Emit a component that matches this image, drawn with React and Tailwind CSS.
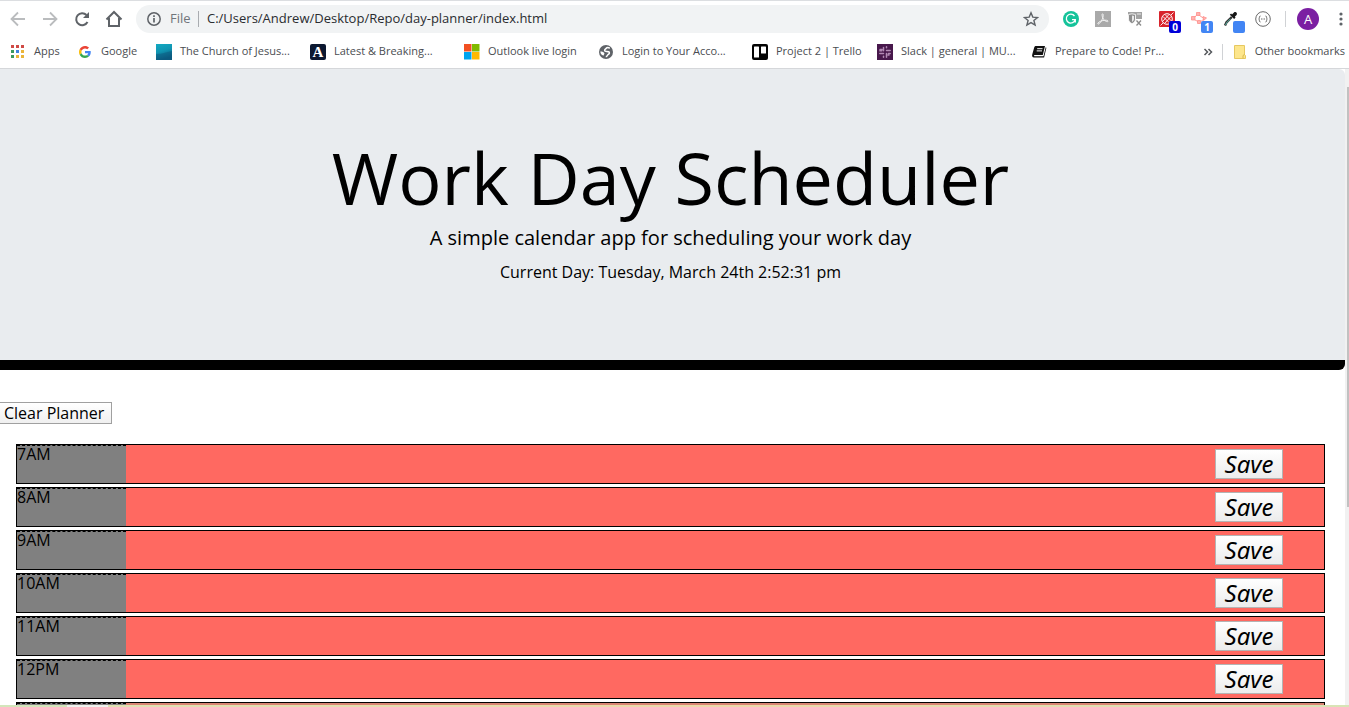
import React from "react";

const HOURS = ["7AM", "8AM", "9AM", "10AM", "11AM", "12PM"];

function AppsIcon() {
  const colors = ["#d04a45", "#d04a45", "#d04a45", "#3c9a5f", "#3f84e0", "#eab53a", "#3c9a5f", "#eab53a", "#eab53a"];
  return (
    <svg viewBox="0 0 14 14" className="h-3.5 w-3.5 shrink-0">
      {colors.map((c, i) => (
        <rect key={i} x={1 + (i % 3) * 5} y={Math.floor(i / 3) * 5} width="3" height="3" fill={c} />
      ))}
    </svg>
  );
}

function GoogleIcon() {
  return (
    <svg viewBox="0 0 48 48" className="ml-0.5 h-3 w-3 shrink-0">
      <path fill="#EA4335" d="M24 9.5c3.54 0 6.71 1.22 9.21 3.6l6.85-6.85C35.9 2.38 30.47 0 24 0 14.62 0 6.51 5.38 2.56 13.22l7.98 6.19C12.43 13.72 17.74 9.5 24 9.5z" />
      <path fill="#4285F4" d="M46.98 24.55c0-1.57-.15-3.09-.38-4.55H24v9.02h12.94c-.58 2.96-2.26 5.48-4.78 7.18l7.73 6c4.51-4.18 7.09-10.36 7.09-17.65z" />
      <path fill="#FBBC05" d="M10.53 28.59c-.48-1.45-.76-2.99-.76-4.59s.27-3.14.76-4.59l-7.98-6.19C.92 16.46 0 20.12 0 24c0 3.88.92 7.54 2.56 10.78l7.97-6.19z" />
      <path fill="#34A853" d="M24 48c6.48 0 11.93-2.13 15.89-5.81l-7.73-6c-2.15 1.45-4.92 2.3-8.16 2.3-6.26 0-11.57-4.22-13.47-9.91l-7.98 6.19C6.51 42.62 14.62 48 24 48z" />
    </svg>
  );
}

function ChurchIcon() {
  return (
    <svg viewBox="0 0 16 16" className="h-4 w-4 shrink-0">
      <defs>
        <linearGradient id="sea" x1="0" y1="0" x2="0.3" y2="1">
          <stop offset="0" stopColor="#12aac2" />
          <stop offset="0.5" stopColor="#1095b2" />
          <stop offset="1" stopColor="#0a5a80" />
        </linearGradient>
      </defs>
      <rect width="16" height="16" fill="url(#sea)" />
      <path d="M0 10Q5 10 8 9T16 7V16H0z" fill="#0b5a80" opacity="0.5" />
    </svg>
  );
}

function AtlanticIcon() {
  return (
    <span className="flex h-4 w-4 shrink-0 items-center justify-center rounded-xs bg-[#0c1830] font-['Liberation_Serif',serif] text-[15px] leading-4 font-bold text-white">
      A
    </span>
  );
}

function MicrosoftIcon() {
  return (
    <svg viewBox="0 0 16 16" className="h-4 w-4 shrink-0">
      <path fill="#f25022" d="M0 0h7.500v7.500H0z" />
      <path fill="#7fba00" d="M8 0h7.500v7.500H8z" />
      <path fill="#00a4ef" d="M0 8h7.500v7.500H0z" />
      <path fill="#ffb900" d="M8 8h7.500v7.500H8z" />
    </svg>
  );
}

function GlobeIcon() {
  return (
    <svg viewBox="0 0 16 16" className="h-4 w-4 shrink-0">
      <circle cx="8" cy="8" r="7" fill="#5f6368" />
      <path d="M11.800 4.200C10.500 3.600 9 3.300 8.300 4.300c-.7 1-1.300.8-1.600 1.600-.4 1.200.9 1.500 2 1.500 1.300 0 2.900.3 2.700 1.700-.2 1.300-1.600 1.200-2 2.300-.2.7-.8 1.200-1.600 1.300" fill="none" stroke="#fff" strokeWidth="1.500" />
      <path d="M2.300 7.500c1.500 0 3 .3 4 1.500.3 1-.5 1.300-.5 2.600C4 11.500 2.500 10 2.300 7.500z" fill="#fff" />
    </svg>
  );
}

function TrelloIcon() {
  return (
    <svg viewBox="0 0 16 16" className="h-4 w-4 shrink-0">
      <rect width="16" height="16" rx="2" fill="#050505" />
      <rect x="2" y="2.500" width="5" height="11" rx="0.500" fill="#fff" />
      <rect x="9" y="2.500" width="5" height="7" rx="0.500" fill="#fff" />
    </svg>
  );
}

function SlackIcon() {
  return (
    <svg viewBox="0 0 16 16" className="h-4 w-4 shrink-0">
      <rect width="16" height="16" fill="#48184c" />
      <g stroke="#b28ab5" strokeWidth="1.500" strokeLinecap="round" fill="none">
        <path d="M6.500 3.500v3.200M2.800 6.700h2M9.500 2.800v1M9.500 6.500h3.700M2.800 9.500h3.700M6.500 12.200v1M9.500 9.500v3.700M11.500 9.500h1.700M3 5.500h2M11 11h1" />
      </g>
    </svg>
  );
}

function BookIcon() {
  return (
    <svg viewBox="0 0 16 16" className="h-4 w-4 shrink-0">
      <path d="M5 2h9l-2.200 9H3.800c-1 0-1.300 1.200-.3 1.200h9l2.200-9 .7.500-2.300 9.800H3c-1.800 0-2.200-1.500-1.700-3.200L3.200 3.500C3.500 2.500 4 2 5 2z" fill="#111" />
      <path d="M6.200 4.700h5.300M5.700 6.900h5.300" stroke="#fff" strokeWidth="1" />
    </svg>
  );
}

function FolderIcon() {
  return (
    <svg viewBox="0 0 14 16" className="h-4 w-3.5 shrink-0">
      <path d="M1.500 1.500h10v9.500l1 .5v3h-11z" fill="#fde68c" stroke="#e6c860" />
      <path d="M10 14.500v-3l1.500-1" fill="none" stroke="#d9b84c" />
    </svg>
  );
}

const BOOKMARKS = [
  { label: "Apps", icon: <AppsIcon />, cls: "w-[67px] gap-2.5" },
  { label: "Google", icon: <GoogleIcon />, cls: "w-[79px] gap-2.5" },
  { label: "The Church of Jesus...", icon: <ChurchIcon />, cls: "w-[154px] gap-2" },
  { label: "Latest & Breaking...", icon: <AtlanticIcon />, cls: "w-[154px] gap-2" },
  { label: "Outlook live login", icon: <MicrosoftIcon />, cls: "w-[134px] gap-2" },
  { label: "Login to Your Acco...", icon: <GlobeIcon />, cls: "w-[154px] gap-2" },
  { label: "Project 2 | Trello", icon: <TrelloIcon />, cls: "w-[125px] gap-2" },
  { label: "Slack | general | MU...", icon: <SlackIcon />, cls: "w-[154px] gap-2" },
  { label: "Prepare to Code! Pr...", icon: <BookIcon />, cls: "w-[150px] gap-2" },
];

function Toolbar() {
  return (
    <div className="flex h-9 items-center pr-1">
      <nav className="flex w-[136px] shrink-0 items-center gap-2 pl-2">
        <button aria-label="Back" className="h-5 w-5">
          <svg viewBox="0 0 20 20" className="h-5 w-5" fill="none" stroke="#babcbe" strokeWidth="1.800">
            <path d="M17 10H4M10 3.500L3.500 10l6.500 6.500" />
          </svg>
        </button>
        <button aria-label="Forward" className="ml-1 h-5 w-5">
          <svg viewBox="0 0 20 20" className="h-5 w-5" fill="none" stroke="#babcbe" strokeWidth="1.800">
            <path d="M3 10h13M10 3.500l6.500 6.500-6.500 6.500" />
          </svg>
        </button>
        <button aria-label="Reload" className="ml-1 h-5 w-5">
          <svg viewBox="0 0 20 20" className="h-5 w-5" fill="none" stroke="#5f6368" strokeWidth="2">
            <path d="M15.500 13A6 6 0 1 1 14.500 6" />
            <path d="M17 3v6h-6z" fill="#5f6368" stroke="none" />
          </svg>
        </button>
        <button aria-label="Home" className="ml-1 h-5 w-5">
          <svg viewBox="0 0 20 20" className="h-5 w-5" fill="none" stroke="#5f6368" strokeWidth="2">
            <path d="M2.500 10.500L10 3l7.500 7.500M5 9v8h10V9" />
          </svg>
        </button>
      </nav>
      <div className="flex h-7 flex-1 items-center rounded-full bg-[#f1f3f4] px-2.5">
        <svg viewBox="0 0 16 16" className="h-4 w-4 shrink-0" fill="none" stroke="#5f6368" strokeWidth="1.500">
          <circle cx="8" cy="8" r="6.200" />
          <path d="M8 7v4.500M8 4.300v1.600" strokeWidth="1.700" />
        </svg>
        <span className="ml-2 w-7 text-[13px] text-[#70757a]">File</span>
        <span className="h-4 w-px bg-[#a9acb0]" />
        <input
          aria-label="Address"
          className="ml-2 min-w-0 flex-1 bg-transparent text-[13px] text-[#2a2c30] outline-none"
          defaultValue="C:/Users/Andrew/Desktop/Repo/day-planner/index.html"
        />
        <button aria-label="Bookmark this page" className="h-4 w-4">
          <svg viewBox="0 0 16 16" className="h-4 w-4" fill="none" stroke="#5f6368" strokeWidth="1.400">
            <path d="M8 1.800l1.800 4.300 4.700.4-3.600 3 1.200 4.600L8 11.600l-4.100 2.500 1.200-4.600-3.600-3 4.700-.4z" />
          </svg>
        </button>
      </div>
      <Extensions />
    </div>
  );
}

function Extensions() {
  return (
    <div className="flex w-[296px] shrink-0 items-center pl-3.5">
      <button aria-label="Grammarly" className="mr-4 h-4 w-4">
        <svg viewBox="0 0 16 16" className="h-4 w-4">
          <circle cx="8" cy="8" r="8" fill="#15c39a" />
          <path d="M11.500 5A4.500 4.500 0 1 0 12.200 8.700H9M12.300 8.500v3" fill="none" stroke="#fff" strokeWidth="1.300" />
        </svg>
      </button>
      <button aria-label="Adobe Acrobat" className="mr-4 h-4 w-4">
        <svg viewBox="0 0 16 16" className="h-4 w-4">
          <rect width="16" height="16" fill="#a9a9a9" />
          <path d="M7.500 2.800c1.200 0 .8 3-.3 5.500C6 11 4 13.500 3 13c-1-.8 2-3 5-3.500 3-.6 5.300-.2 5 .8-.4 1-3-.2-4.300-1.800C7.300 6.700 6.500 3 7.500 2.800z" fill="none" stroke="#f4f4f4" strokeWidth="1" />
        </svg>
      </button>
      <button aria-label="Page blocker" className="mr-4 h-4 w-4">
        <svg viewBox="0 0 16 16" className="h-4 w-4">
          <path d="M1 1h14v7H9V5H1z" fill="#a3a3a3" />
          <path d="M1.500 3.500L5 2.800l3.500.7V8c0 2-1.500 3.700-3.500 4.700C3 11.700 1.500 10 1.500 8z" fill="#8d8d8d" stroke="#fff" strokeWidth="0.800" />
          <path d="M5 4.500v6.500c1.300-.8 2-1.800 2-3.200V5z" fill="#e9e9e9" />
          <path d="M10 3h4" stroke="#e9e9e9" strokeWidth="1" />
          <path d="M9.500 9.500l4.500 5M14 9.500l-4.500 5" stroke="#8a8a8a" strokeWidth="1.300" />
        </svg>
      </button>
      <button aria-label="Ad filter, 0 blocked" className="relative mr-4 h-4 w-4">
        <svg viewBox="0 0 16 16" className="h-4 w-4">
          <rect width="16" height="16" rx="1" fill="#d8242c" />
          <circle cx="8" cy="8" r="5.300" fill="none" stroke="#fff" strokeWidth="1" />
          <path d="M3.500 10.500L10 3.500M5.500 12.500l6.500-7M4 5.500l6 6M6 3.500l6.500 6.500M1.500 14.500l3-3M12 4l2.500-2.500" stroke="#fff" strokeWidth="0.900" />
        </svg>
        <span className="absolute top-2.5 left-2.5 h-3 w-3 rounded-xs bg-[#0000d8] text-center text-[10px] leading-3 font-bold text-white">0</span>
      </button>
      <button aria-label="Redirects, 1 active" className="relative mr-4 h-4 w-4">
        <svg viewBox="0 0 16 16" className="h-4 w-4">
          <path d="M4 6l3-3.500M7 3.500l6 4M4 9l5 2.500M13 8l-5 4" stroke="#ff9c98" strokeWidth="1" fill="none" />
          <g fill="#ffb3b0" stroke="#ff8f8b" strokeWidth="0.800">
            <path d="M0.500 5.500h3.500v3.500H0.500zM5.500 1.500h3.500v3H5.500zM6.500 9.500h3v3h-3zM12 5.500l3.500 1.500-3 2.500z" />
          </g>
        </svg>
        <span className="absolute top-2.5 left-2.5 h-3 w-3 rounded-xs bg-[#4285f4] text-center text-[10px] leading-3 font-bold text-white">1</span>
      </button>
      <button aria-label="Color picker" className="relative mr-4 h-4 w-4">
        <svg viewBox="0 0 16 16" className="h-4 w-4">
          <path d="M9 3.500l2-2c1.400-1.400 4 .8 2.600 2.400L11.800 5.700l.8.900-1.500 1.500-4.300-4.300 1.300-1.200z" fill="#161616" />
          <path d="M8.800 6L3.500 11.300 2 14.500" fill="none" stroke="#333" strokeWidth="2.400" />
          <path d="M7.500 7.800L3.800 11.500 2.500 14" fill="none" stroke="#5cc4b2" strokeWidth="0.900" />
        </svg>
        <span className="absolute top-2.5 left-2.5 h-3 w-3 rounded-xs bg-[#4285f4]" />
      </button>
      <button aria-label="JSON viewer" className="h-4 w-4">
        <svg viewBox="0 0 16 16" className="h-4 w-4" fill="none" stroke="#6a6a6a" strokeWidth="1">
          <circle cx="8" cy="8" r="7.300" />
          <path d="M5.500 5c-1.800 0-.5 2.500-1.800 3 1.300.5 0 3 1.800 3M10.500 5c1.800 0 .5 2.500 1.800 3-1.300.5 0 3-1.800 3M6 8h1M7.500 8h1M9 8h1" />
        </svg>
      </button>
      <span className="ml-3.5 h-4 w-px bg-[#d0d2d5]" />
      <button aria-label="Profile" className="ml-[11px] h-[22px] w-[22px] rounded-full bg-[#7b1fa2] text-center text-[13px] leading-[22px] text-white">
        A
      </button>
      <button aria-label="Menu" className="ml-auto h-4 w-2">
        <svg viewBox="0 0 8 16" className="h-4 w-2" fill="#5f6368">
          <circle cx="4" cy="3" r="1.600" />
          <circle cx="4" cy="8" r="1.600" />
          <circle cx="4" cy="13" r="1.600" />
        </svg>
      </button>
    </div>
  );
}

function BookmarksBar() {
  return (
    <div className="flex h-8 items-center overflow-hidden border-b border-[#d5d7da] pb-0.5 pl-2.5 text-[11px] whitespace-nowrap text-[#4a4d51]">
      {BOOKMARKS.map((b) => (
        <a key={b.label} href="#" className={"flex shrink-0 items-center " + b.cls}>
          {b.icon}
          <span>{b.label}</span>
        </a>
      ))}
      <button aria-label="More bookmarks" className="ml-auto h-4 w-4 shrink-0">
        <svg viewBox="0 0 16 16" className="h-4 w-4" fill="none" stroke="#55585c" strokeWidth="1.500">
          <path d="M4.500 5l3 3-3 3M8.500 5l3 3-3 3" />
        </svg>
      </button>
      <span className="mx-1.5 h-4 w-px shrink-0 bg-[#d0d2d5]" />
      <a href="#" className="ml-1 flex shrink-0 items-center gap-2 pr-1">
        <FolderIcon />
        <span>Other bookmarks</span>
      </a>
    </div>
  );
}

function HourRow({ hour }) {
  return (
    <li className="flex h-10 shrink-0 justify-between border border-black bg-[#ff6961]">
      <div className="w-[109px] border-t border-dashed border-black bg-[#808080] leading-4">{hour}</div>
      <button
        aria-label={"Save " + hour}
        className="mt-1 mr-[41px] h-[30px] w-[68px] border border-[#b4b4b4] bg-linear-to-b from-white to-[#ececec] font-['Noto_Sans','Open_Sans',sans-serif] text-2xl leading-7 italic"
      >
        Save
      </button>
    </li>
  );
}

export default function App() {
  return (
    <div className="flex h-screen flex-col overflow-hidden bg-white font-['Open_Sans',sans-serif] text-black">
      <div className="shrink-0 border-t border-[#dcdee1]">
        <Toolbar />
        <BookmarksBar />
      </div>
      <div className="flex min-h-0 flex-1">
        <div className="flex min-w-0 flex-1 flex-col overflow-hidden">
          <header className="shrink-0 rounded-r-md border-b-10 border-black bg-[#e9ecef] pt-[65px] pr-9 pb-[76px] pl-8 text-center">
            <h1 className="text-7xl leading-[86px]">Work Day Scheduler</h1>
            <p className="mt-[3px] text-xl leading-[30px]">A simple calendar app for scheduling your work day</p>
            <p className="mt-[7px] leading-6">Current Day: Tuesday, March 24th 2:52:31 pm</p>
          </header>
          <div className="shrink-0 pt-8">
            <button className="block h-[22px] border border-l-0 border-[#a0a0a0] bg-linear-to-b from-white to-[#f0f0f0] pr-[7px] pl-1 leading-5">
              Clear Planner
            </button>
          </div>
          <ul className="mt-5 mr-5 ml-4 flex flex-col gap-[3px]">
            {HOURS.map((h) => (
              <HourRow key={h} hour={h} />
            ))}
            <li className="flex h-10 shrink-0 border border-black bg-[#d98573]">
              <div className="w-[109px] border-t border-dashed border-black bg-[#808080]" />
            </li>
          </ul>
        </div>
        <div className="w-1 shrink-0 bg-[#f1f1f1] pt-[18px]">
          <div className="ml-0.5 h-[68%] bg-[#c1c1c1]" />
        </div>
      </div>
      <div className="flex h-0.5 shrink-0">
        <div className="w-[5%] bg-[#d3e6bb]" />
        <div className="w-[3%] bg-[#f0f3ee]" />
        <div className="flex-1 bg-linear-to-r from-[#dfe2b2] via-[#ecd9a8] to-[#d8e4b6]" />
      </div>
    </div>
  );
}
